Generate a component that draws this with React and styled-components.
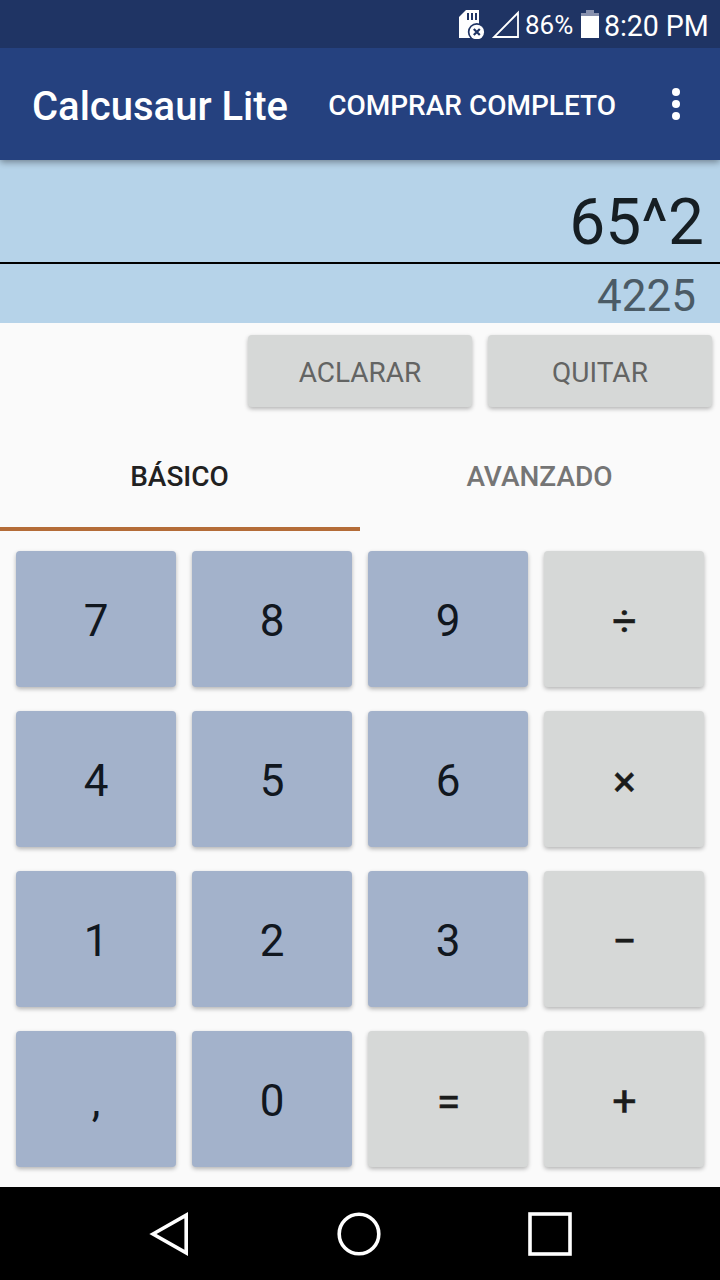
import React, { useState } from 'react';
import styled, { createGlobalStyle } from 'styled-components';

const GlobalStyle = createGlobalStyle`
    * {
        box-sizing: border-box;
    }
    body {
        margin: 0;
        background-color: #fafafa;
        font-family: Roboto, "Noto Sans", sans-serif;
    }
    button {
        border: none;
        outline: none;
        padding: 0;
        background: none;
        color: inherit;
        font-family: inherit;
    }
`;

const Screen = styled.div`
    display: flex;
    flex-direction: column;
    width: 720px;
    height: 1280px;
    overflow: hidden;
    background-color: #fafafa;
`;

const StatusBar = styled.div`
    display: flex;
    align-items: center;
    justify-content: flex-end;
    position: relative;
    z-index: 2;
    height: 48px;
    padding: 0 12px 0 0;
    background-color: #1f3464;
    color: #fff;
    svg {
        display: block;
        flex: none;
    }
`;

const Percent = styled.span`
    width: 49px;
    margin: 2px 7px 0 6px;
    font-size: 26px;
    line-height: 32px;
    white-space: nowrap;
`;

const Clock = styled.span`
    width: 104px;
    margin: 3px 0 0 5px;
    font-size: 28.6px;
    line-height: 34px;
    letter-spacing: -0.1px;
    white-space: nowrap;
`;

const AppBar = styled.header`
    display: flex;
    align-items: center;
    position: relative;
    z-index: 1;
    height: 112px;
    padding: 0 32px;
    background-color: #25417f;
    color: #fff;
    box-shadow: 0 2px 7px rgba(0, 0, 0, 0.4);
`;

const Title = styled.h1`
    flex: 1;
    margin: 6px 0 0;
    font-size: 40px;
    font-weight: 500;
    line-height: 48px;
    white-space: nowrap;
`;

const BuyButton = styled.button`
    margin: 4px 48px 0 0;
    font-size: 28px;
    font-weight: 500;
    line-height: 34px;
    white-space: nowrap;
`;

const MoreButton = styled.button`
    width: 24px;
    height: 48px;
    svg {
        display: block;
    }
`;

const Display = styled.section`
    height: 163px;
    background-color: #b6d3e9;
    text-align: right;
`;

const Expression = styled.div`
    height: 104px;
    padding: 25px 16px 0 0;
    border-bottom: 2px solid #000;
    color: #161e23;
    font-size: 64px;
    line-height: 75px;
`;

const Result = styled.div`
    padding: 6px 24px 0 0;
    color: #4b5b66;
    font-size: 44px;
    line-height: 52px;
`;

const Actions = styled.div`
    display: flex;
    justify-content: flex-end;
    gap: 16px;
    height: 98px;
    padding: 12px 8px 0 0;
`;

const RaisedButton = styled.button`
    border-radius: 4px;
    background-color: ${({ $tone }) => ($tone === 'blue' ? '#a3b2cb' : '#d6d8d7')};
    box-shadow: 0 2px 4px rgba(0, 0, 0, 0.28);
`;

const ActionButton = styled(RaisedButton)`
    width: 224px;
    height: 72px;
    padding-top: 3px;
    color: #636463;
    font-size: 28px;
`;

const Tabs = styled.div`
    display: flex;
    height: 110px;
`;

const Tab = styled.button`
    flex: 1;
    padding: 4px 1px 0 0;
    border-bottom: 4px solid ${({ $active }) => ($active ? '#b46c38' : 'transparent')};
    color: ${({ $active }) => ($active ? '#212121' : '#757575')};
    font-size: 28px;
    font-weight: 500;
`;

const Keypad = styled.div`
    display: grid;
    grid-template-columns: repeat(4, 160px);
    grid-auto-rows: 136px;
    gap: 24px 16px;
    flex: 1;
    padding: 20px 16px;
`;

const Key = styled(RaisedButton)`
    padding-top: 4px;
    color: ${({ $tone }) => ($tone === 'blue' ? '#11171f' : '#1b1c1b')};
    font-size: 44px;
`;

const OperatorKey = styled(Key)`
    padding: 3px 0 0 1px;
    font-size: 43px;
    -webkit-text-stroke: 0.5px #1b1c1b;
`;

const NavBar = styled.nav`
    display: flex;
    justify-content: center;
    align-items: center;
    gap: 147px;
    flex: none;
    height: 93px;
    padding: 1px 2px 0 0;
    background-color: #000;
`;

const NavButton = styled.button`
    width: 44px;
    height: 44px;
    svg {
        display: block;
        overflow: visible;
        fill: none;
        stroke: #fff;
        stroke-width: 3.6;
    }
`;

const SdCardIcon = () => (
    <svg width="26" height="30" viewBox="0 0 26 30">
        <path d="M7 1h13v28H0V8z" fill="#fff" />
        <path d="M9 4v7M13 4v7M17 4v7" stroke="#1f3464" strokeWidth="2" />
        <circle cx="17.8" cy="23" r="9" fill="#1f3464" />
        <circle cx="17.8" cy="23" r="7.3" fill="#fff" />
        <path d="M14.8 20l6 6M20.8 20l-6 6" stroke="#1f3464" strokeWidth="2.2" />
    </svg>
);

const SignalIcon = () => (
    <svg width="34" height="30" viewBox="0 0 34 30">
        <path d="M9 28H33V3.8z" fill="none" stroke="#fff" strokeWidth="1.8" />
    </svg>
);

const BatteryIcon = () => (
    <svg width="18" height="30" viewBox="0 0 18 30">
        <path d="M5 1h8v3h5v3H0V4h5z" fill="#8790ad" />
        <path d="M0 7h18v22H0z" fill="#fff" />
    </svg>
);

const KEYS = ['7', '8', '9', '÷', '4', '5', '6', '×', '1', '2', '3', '−', ',', '0', '=', '+'];
const OPERATORS = '÷×−=+';

export default function App() {
    const [tab, setTab] = useState('BÁSICO');

    return (
        <>
            <GlobalStyle />
            <Screen>
                <StatusBar>
                    <SdCardIcon />
                    <SignalIcon />
                    <Percent>86%</Percent>
                    <BatteryIcon />
                    <Clock>8:20 PM</Clock>
                </StatusBar>
                <AppBar>
                    <Title>Calcusaur Lite</Title>
                    <BuyButton>COMPRAR COMPLETO</BuyButton>
                    <MoreButton aria-label="Más opciones">
                        <svg width="24" height="48" viewBox="0 0 24 48" fill="#fff">
                            <circle cx="12" cy="12" r="4" />
                            <circle cx="12" cy="24" r="4" />
                            <circle cx="12" cy="36" r="4" />
                        </svg>
                    </MoreButton>
                </AppBar>
                <Display>
                    <Expression>65^2</Expression>
                    <Result>4225</Result>
                </Display>
                <Actions>
                    <ActionButton>ACLARAR</ActionButton>
                    <ActionButton>QUITAR</ActionButton>
                </Actions>
                <Tabs>
                    {['BÁSICO', 'AVANZADO'].map((name) => (
                        <Tab key={name} $active={tab === name} onClick={() => setTab(name)}>
                            {name}
                        </Tab>
                    ))}
                </Tabs>
                <Keypad>
                    {KEYS.map((k) => (
                        OPERATORS.includes(k)
                            ? <OperatorKey key={k}>{k}</OperatorKey>
                            : <Key key={k} $tone="blue">{k}</Key>
                    ))}
                </Keypad>
                <NavBar>
                    <NavButton aria-label="Atrás">
                        <svg width="44" height="44" viewBox="0 0 44 44">
                            <path d="M7 22L40.2 3.2v37.6z" />
                        </svg>
                    </NavButton>
                    <NavButton aria-label="Inicio">
                        <svg width="44" height="44" viewBox="0 0 44 44">
                            <circle cx="22" cy="22" r="19.8" />
                        </svg>
                    </NavButton>
                    <NavButton aria-label="Recientes">
                        <svg width="44" height="44" viewBox="0 0 44 44">
                            <rect x="2" y="2" width="40" height="40" />
                        </svg>
                    </NavButton>
                </NavBar>
            </Screen>
        </>
    );
}
